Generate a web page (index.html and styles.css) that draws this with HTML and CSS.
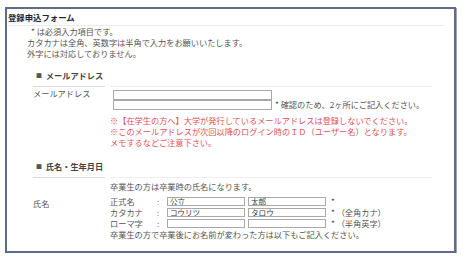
FILE: index.html
```html
<!DOCTYPE html>
<html lang="ja">
<head>
    <meta charset="UTF-8">
    <meta name="viewport" content="width=device-width, initial-scale=1.0">
    <title>登録申込フォーム</title>
    <link rel="stylesheet" href="styles.css">
</head>
<body>
    <div class="form-box">
        <h1 class="form-title">登録申込フォーム</h1>

        <!-- Notes -->
        <div class="intro">
            <p class="req">* は必須入力項目です。</p>
            <p>カタカナは全角、英数字は半角で入力をお願いいたします。</p>
            <p>外字には対応しておりません。</p>
        </div>

        <!-- Mail address -->
        <section class="group">
            <h2 class="group-head"><span class="mark">■</span> メールアドレス</h2>
            <div class="field">
                <div class="field-label">メールアドレス</div>
                <div class="field-body">
                    <div class="mail-row">
                        <div class="mail-inputs">
                            <input type="text" class="mail-input">
                            <input type="text" class="mail-input">
                        </div>
                        <span class="hint">* 確認のため、2ヶ所にご記入ください。</span>
                    </div>
                    <div class="warn">
                        <p>※【在学生の方へ】大学が発行しているメールアドレスは登録しないでください。</p>
                        <p>※このメールアドレスが次回以降のログイン時のＩＤ（ユーザー名）となります。</p>
                        <p>メモするなどご注意下さい。</p>
                    </div>
                </div>
            </div>
        </section>

        <!-- Name -->
        <section class="group group-name">
            <h2 class="group-head"><span class="mark">■</span> 氏名・生年月日</h2>
            <div class="field">
                <div class="field-label label-name">氏名</div>
                <div class="field-body">
                    <p>卒業生の方は卒業時の氏名になります。</p>
                    <div class="name-rows">
                        <div class="name-row">
                            <span class="sub-label">正式名</span>
                            <span class="colon">:</span>
                            <input type="text" class="name-input" value="公立">
                            <input type="text" class="name-input" value="太郎">
                            <span class="hint">*</span>
                        </div>
                        <div class="name-row">
                            <span class="sub-label">カタカナ</span>
                            <span class="colon">:</span>
                            <input type="text" class="name-input" value="コウリツ">
                            <input type="text" class="name-input" value="タロウ">
                            <span class="hint">* （全角カナ）</span>
                        </div>
                        <div class="name-row">
                            <span class="sub-label">ローマ字</span>
                            <span class="colon">:</span>
                            <input type="text" class="name-input">
                            <input type="text" class="name-input">
                            <span class="hint">* （半角英字）</span>
                        </div>
                    </div>
                    <p>卒業生の方で卒業後にお名前が変わった方は以下もご記入ください。</p>
                </div>
            </div>
        </section>
    </div>
</body>
</html>
```

FILE: styles.css
```css
* {
    box-sizing: border-box;
}

body {
    font-family: "Noto Sans CJK JP", sans-serif;
    font-size: 8.2px;
    line-height: 11px;
    color: #555;
    background: #fff;
    margin: 0;
    padding: 0;
}

p {
    margin: 0;
}

.form-box {
    width: 451px;
    height: 246px;
    margin: 7px 0 0 5px;
    border: 2px solid #5d6b8d;
    box-shadow: 1px 1px 0 #9aa4bc;
    overflow: hidden;
}

.form-title {
    margin: 0 10px 0 1px;
    padding: 2px 0 2px;
    font-size: 8.4px;
    line-height: 12px;
    font-weight: bold;
    color: #1f2433;
    border-bottom: 1px solid #ececec;
}

.intro {
    padding-left: 20px;
}

.intro .req {
    padding-left: 4px;
}

.group {
    margin: 11px 22px 0 26px;
}

.group-name {
    margin-top: 13px;
}

.group-head {
    margin: 0;
    padding: 0 0 5px 3px;
    font-size: 8.2px;
    line-height: 11px;
    font-weight: bold;
    color: #444;
}

.group-head .mark {
    font-size: 6px;
    color: #555;
    vertical-align: 1px;
    margin-right: 2px;
}

.field {
    display: flex;
    gap: 5px;
}

.field-label {
    width: 72px;
    flex-shrink: 0;
    padding-top: 1px;
    border-top: 1px solid #dedede;
}

.label-name {
    padding-top: 20px;
}

.field-body {
    flex: 1;
    padding-top: 3px;
    border-top: 1px solid #efefef;
}

.mail-row {
    display: flex;
    align-items: flex-end;
    gap: 3px;
}

.mail-inputs {
    display: flex;
    flex-direction: column;
    margin-left: 3px;
}

input {
    font-family: "Noto Sans CJK JP", sans-serif;
    font-size: 7.6px;
    color: #333;
    margin: 0;
    padding: 0 2px;
    border: 1px solid #a9a9a9;
    border-radius: 0;
    background: #fff;
    outline: none;
}

.mail-input {
    width: 159px;
    height: 10px;
}

.warn {
    margin-top: 5px;
    color: #e0525a;
}

.name-rows {
    margin-top: 4px;
}

.name-row {
    display: flex;
    align-items: center;
    height: 11px;
}

.sub-label {
    width: 47px;
}

.colon {
    width: 10px;
    color: #888;
}

.name-input {
    width: 78px;
    height: 9px;
    margin-right: 3px;
}

.name-row .hint {
    margin-left: 2px;
}
```
